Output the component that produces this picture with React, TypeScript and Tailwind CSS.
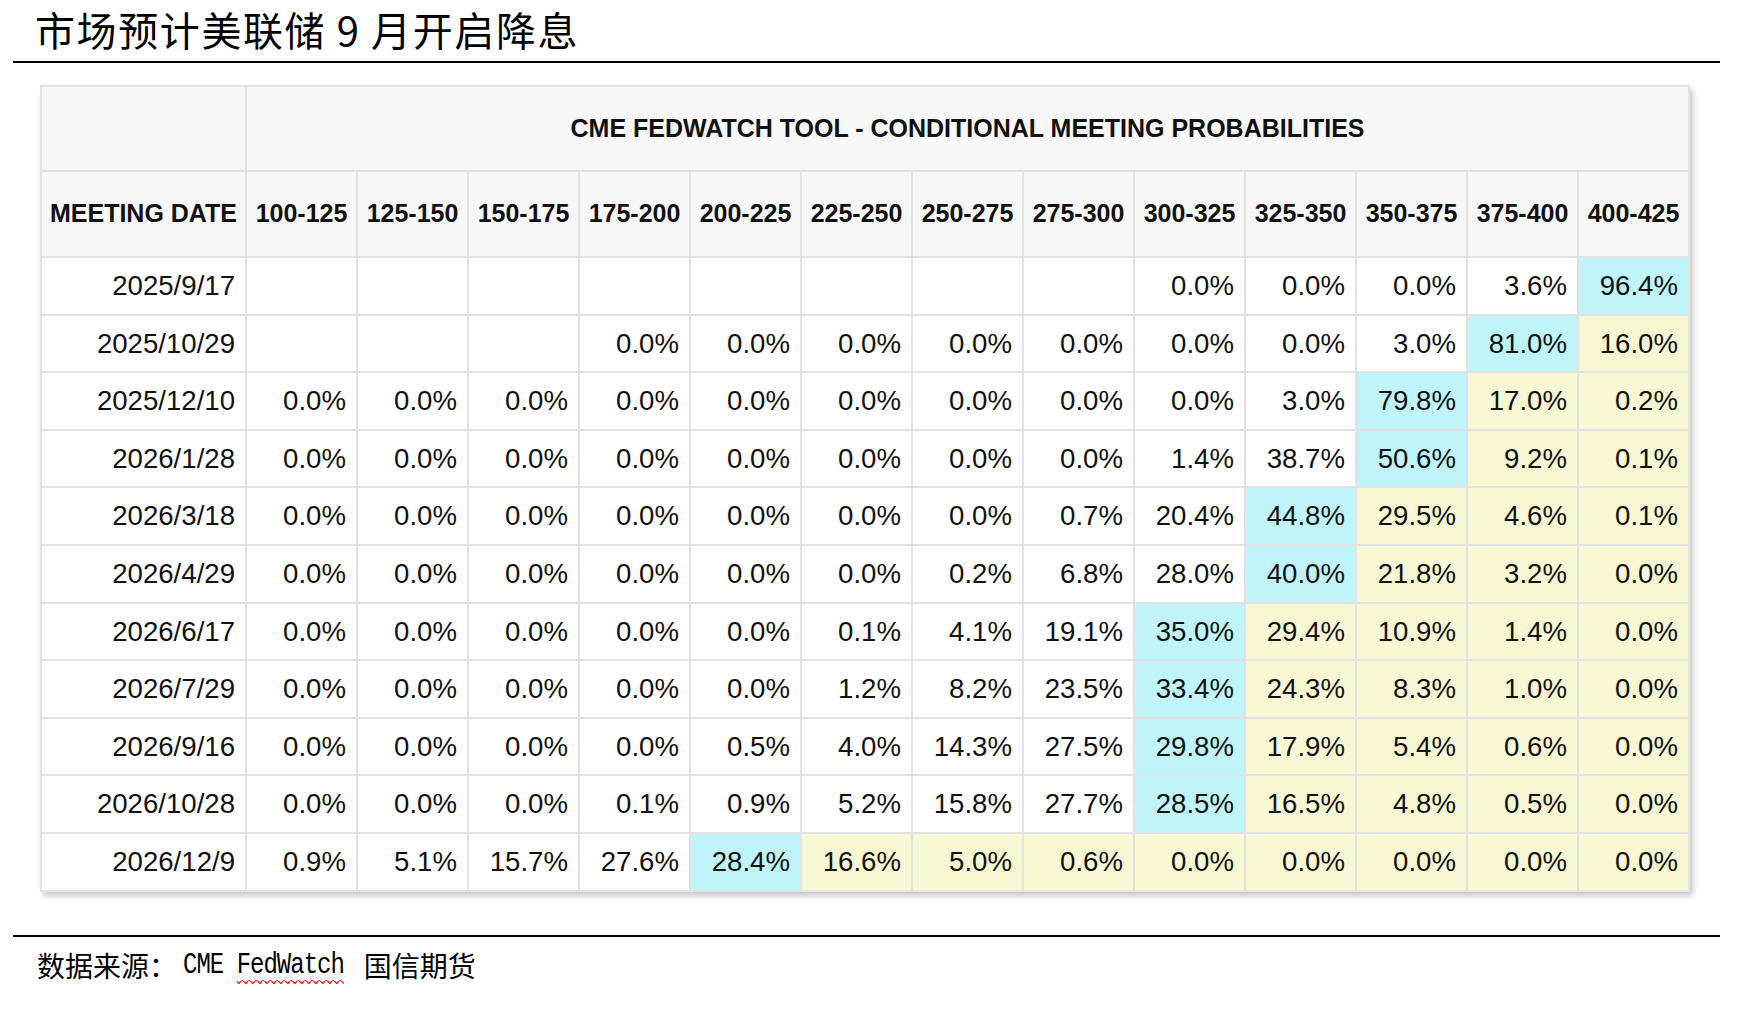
const COLS = [
  "100-125",
  "125-150",
  "150-175",
  "175-200",
  "200-225",
  "225-250",
  "250-275",
  "275-300",
  "300-325",
  "325-350",
  "350-375",
  "375-400",
  "400-425",
];

// value, or "" for empty; cyan marks the row max, cells after it are yellow
const ROWS: { date: string; values: string[] }[] = [
  { date: "2025/9/17", values: ["", "", "", "", "", "", "", "", "0.0%", "0.0%", "0.0%", "3.6%", "96.4%"] },
  { date: "2025/10/29", values: ["", "", "", "0.0%", "0.0%", "0.0%", "0.0%", "0.0%", "0.0%", "0.0%", "3.0%", "81.0%", "16.0%"] },
  { date: "2025/12/10", values: ["0.0%", "0.0%", "0.0%", "0.0%", "0.0%", "0.0%", "0.0%", "0.0%", "0.0%", "3.0%", "79.8%", "17.0%", "0.2%"] },
  { date: "2026/1/28", values: ["0.0%", "0.0%", "0.0%", "0.0%", "0.0%", "0.0%", "0.0%", "0.0%", "1.4%", "38.7%", "50.6%", "9.2%", "0.1%"] },
  { date: "2026/3/18", values: ["0.0%", "0.0%", "0.0%", "0.0%", "0.0%", "0.0%", "0.0%", "0.7%", "20.4%", "44.8%", "29.5%", "4.6%", "0.1%"] },
  { date: "2026/4/29", values: ["0.0%", "0.0%", "0.0%", "0.0%", "0.0%", "0.0%", "0.2%", "6.8%", "28.0%", "40.0%", "21.8%", "3.2%", "0.0%"] },
  { date: "2026/6/17", values: ["0.0%", "0.0%", "0.0%", "0.0%", "0.0%", "0.1%", "4.1%", "19.1%", "35.0%", "29.4%", "10.9%", "1.4%", "0.0%"] },
  { date: "2026/7/29", values: ["0.0%", "0.0%", "0.0%", "0.0%", "0.0%", "1.2%", "8.2%", "23.5%", "33.4%", "24.3%", "8.3%", "1.0%", "0.0%"] },
  { date: "2026/9/16", values: ["0.0%", "0.0%", "0.0%", "0.0%", "0.5%", "4.0%", "14.3%", "27.5%", "29.8%", "17.9%", "5.4%", "0.6%", "0.0%"] },
  { date: "2026/10/28", values: ["0.0%", "0.0%", "0.0%", "0.1%", "0.9%", "5.2%", "15.8%", "27.7%", "28.5%", "16.5%", "4.8%", "0.5%", "0.0%"] },
  { date: "2026/12/9", values: ["0.9%", "5.1%", "15.7%", "27.6%", "28.4%", "16.6%", "5.0%", "0.6%", "0.0%", "0.0%", "0.0%", "0.0%", "0.0%"] },
];

const cellBg = (values: string[], i: number) => {
  const nums = values.map((v) => (v ? parseFloat(v) : -1));
  const maxIdx = nums.indexOf(Math.max(...nums));
  if (i === maxIdx) return "bg-[#bff4fb]";
  if (i > maxIdx) return "bg-[#f7f7d4]";
  return "bg-white";
};

export default function App() {
  return (
    <div className="w-[1746px] h-[1012px] bg-white">
      <div className="h-[61px] flex items-center pb-[4px] pl-[35px] font-['Noto_Sans_CJK_SC',sans-serif] text-[40px] leading-none text-black tracking-[1.6px]">
        市场预计美联储 9 月开启降息
      </div>
      <div className="ml-[13px] w-[1707px] h-[2px] bg-black" />

      <div className="mt-[22px] ml-[40px] w-[1650px] shadow-[3px_4px_6px_rgba(0,0,0,0.22)]">
        <table className="w-[1650px] table-fixed border-collapse font-['Liberation_Sans',Arial,sans-serif] text-[#111]">
          <colgroup>
            <col className="w-[205px]" />
            {COLS.map((c) => (
              <col key={c} />
            ))}
          </colgroup>
          <thead>
            <tr className="h-[85px] bg-[#f7f7f7]">
              <th className="border-2 border-[#e2e2e2]" />
              <th
                colSpan={13}
                className="border-2 border-[#e2e2e2] text-[25px] font-bold text-center"
              >
                CME FEDWATCH TOOL - CONDITIONAL MEETING PROBABILITIES
              </th>
            </tr>
            <tr className="h-[86px] bg-[#f7f7f7]">
              <th className="border-2 border-[#e2e2e2] text-[25px] font-bold text-center whitespace-nowrap">
                MEETING DATE
              </th>
              {COLS.map((c) => (
                <th
                  key={c}
                  className="border-2 border-[#e2e2e2] text-[25px] font-bold text-center whitespace-nowrap"
                >
                  {c}
                </th>
              ))}
            </tr>
          </thead>
          <tbody>
            {ROWS.map((r) => (
              <tr key={r.date} className="h-[57.6px]">
                <td className="border-2 border-[#e2e2e2] bg-white text-right pr-[10px] text-[27.6px]">
                  {r.date}
                </td>
                {r.values.map((v, i) => (
                  <td
                    key={i}
                    className={`border-2 border-[#e2e2e2] text-right pr-[10px] text-[27.6px] ${cellBg(r.values, i)}`}
                  >
                    {v}
                  </td>
                ))}
              </tr>
            ))}
          </tbody>
        </table>
      </div>

      <div className="mt-[43px] ml-[13px] w-[1707px] h-[2px] bg-black" />
      <div className="h-[56px] flex items-center pl-[37px] font-['Noto_Sans_CJK_SC',sans-serif] text-[28px] leading-none text-black">
        <span>数据来源：</span>
        <span className="ml-[6px] inline-block scale-y-[1.25] font-['Liberation_Mono',monospace] text-[24px] tracking-[-1px]">
          CME{" "}
          <span className="underline decoration-wavy decoration-red-600 decoration-1 underline-offset-[5px]">
            FedWatch
          </span>
        </span>
        <span className="ml-[20px]">国信期货</span>
      </div>
    </div>
  );
}
